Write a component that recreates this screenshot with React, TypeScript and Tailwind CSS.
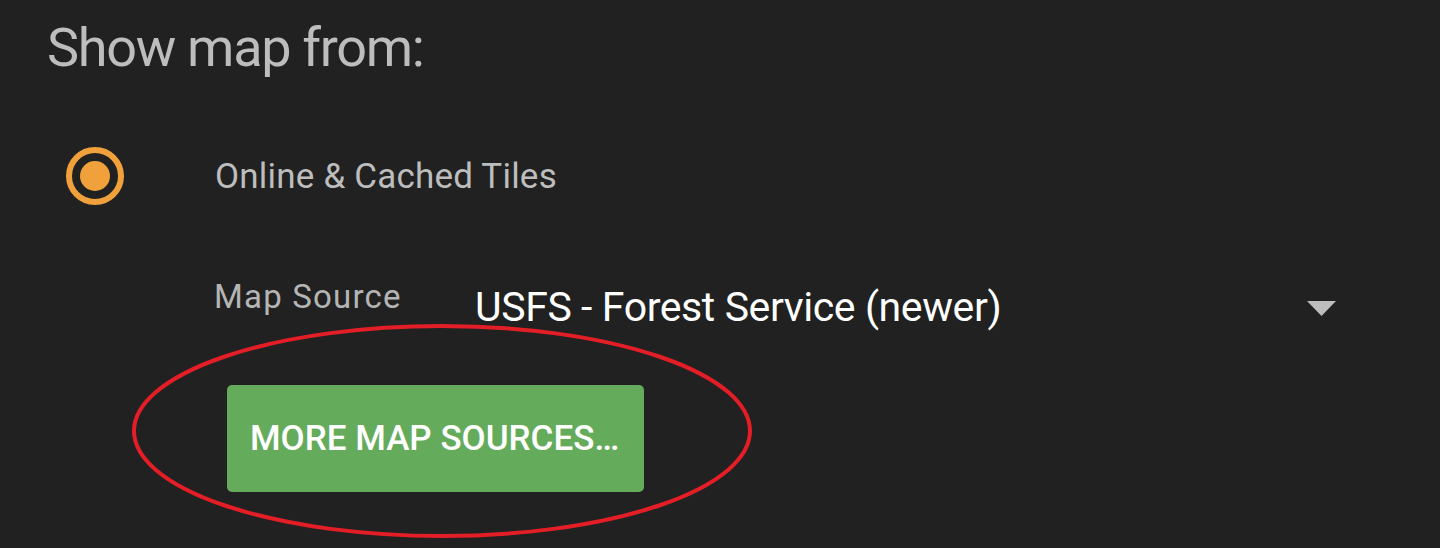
const RadioOn = () => (
    <div className="w-[58px] h-[58px] rounded-full border-[6px] border-[#f1a13b] flex items-center justify-center shrink-0">
        <div className="w-[30px] h-[30px] rounded-full bg-[#f1a13b]" />
    </div>
);

const App = () => {
    return (
        <div className="relative w-[1440px] h-[548px] overflow-hidden bg-[#212121] font-['Roboto','Liberation_Sans',sans-serif]">
            <h1 className="pt-[21px] pl-[47px] text-[54px] leading-none tracking-[-1.3px] font-normal text-[#bdbdbd]">
                Show map from:
            </h1>

            {/* radio option */}
            <div className="mt-[72px] pl-[66px] h-[58px] flex items-center gap-[91px]">
                <RadioOn />
                <span className="text-[35px] leading-none tracking-[0.2px] text-[#bdbdbd]">
                    Online &amp; Cached Tiles
                </span>
            </div>

            {/* source dropdown */}
            <div className="mt-[75px] pl-[214px] pr-[104px] flex items-start">
                <span className="w-[261px] shrink-0 text-[33px] leading-none tracking-[1.2px] text-[#b5b5b5]">
                    Map Source
                </span>
                <span className="mt-[7px] flex-1 text-[41px] leading-none tracking-[-0.4px] text-white">
                    USFS - Forest Service (newer)
                </span>
                <svg
                    width="29"
                    height="15"
                    viewBox="0 0 29 15"
                    className="mt-[21px] shrink-0"
                >
                    <polygon points="0,0 29,0 14.5,15" fill="#bdbdbd" />
                </svg>
            </div>

            <button className="mt-[57px] ml-[227px] w-[417px] h-[107px] rounded-[5px] bg-[#65ab5c] flex items-center pl-[23px] text-[35px] leading-none font-medium text-white">
                MORE MAP SOURCES…
            </button>

            {/* red annotation ring */}
            <svg
                width="622"
                height="216"
                viewBox="0 0 622 216"
                className="absolute left-[131px] top-[323px] pointer-events-none"
            >
                <ellipse
                    cx="311"
                    cy="108"
                    rx="308"
                    ry="105"
                    fill="none"
                    stroke="#e31e27"
                    strokeWidth="4"
                />
            </svg>
        </div>
    );
};

export default App;
